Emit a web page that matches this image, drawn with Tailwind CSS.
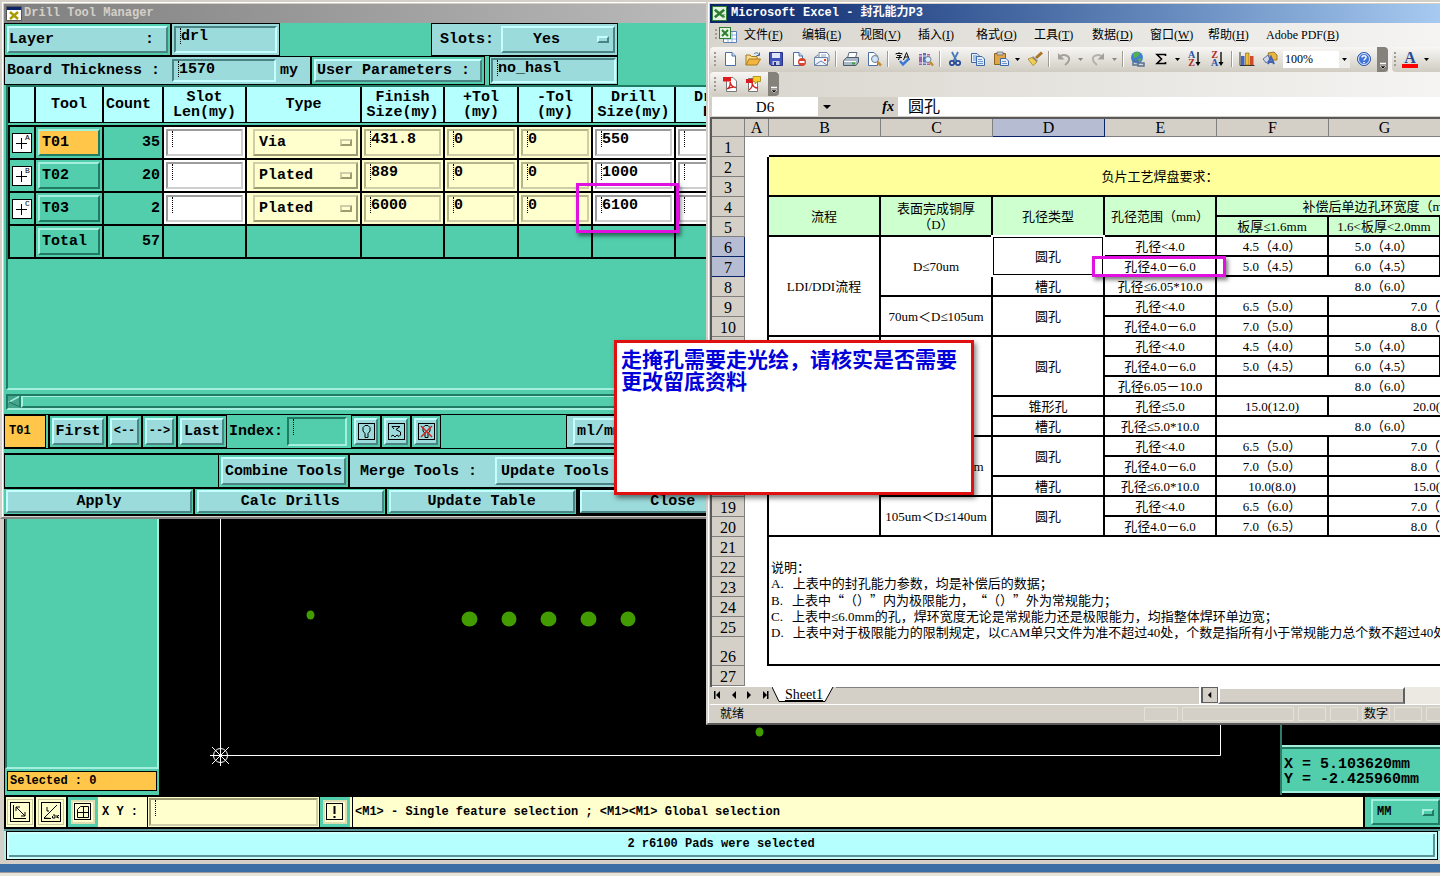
<!doctype html>
<html lang="zh-CN">
    <head>
        <meta charset="UTF-8" />
        <meta name="viewport" content="width=device-width, initial-scale=1.0" />
        <title>Drill Tool Manager</title>
        <script src="https://cdn.jsdelivr.net/npm/@tailwindcss/browser@4"></script>
    </head>
    <body
        class="relative flex h-screen flex-col overflow-hidden bg-[#3a6ea5] font-['Liberation_Mono','Noto_Sans_CJK_SC',monospace] font-bold text-black"
    >
        <!-- graphic editor, behind the other windows -->
        <main
            class="flex min-h-0 flex-1 flex-col border-l-4 border-b-4 border-[#d4d0c8] bg-[#52cead]"
        >
            <div class="flex min-h-0 flex-1 bg-black">
                <aside
                    class="flex w-[155px] shrink-0 flex-col border-l border-black bg-[#52cead]"
                >
                    <div
                        class="flex-1 border-2 border-t-[#217b63] border-l-[#217b63] border-r-[#a5efde] border-b-[#a5efde]"
                    ></div>
                    <div
                        class="mx-0.5 mt-0.5 mb-1 border border-black bg-[#ffc64a] px-0.5 text-[12px] leading-[18px]"
                    >
                        Selected : 0
                    </div>
                </aside>
                <div class="min-w-0 flex-1">
                    <svg class="size-full" fill="none">
                        <path d="M61.500 0V755.500H1061.500V0" stroke="#fff" />
                        <g stroke="#fff">
                            <circle cx="61.500" cy="755.500" r="7" />
                            <path
                                d="M51 755.500H72M61.500 745V766M53 747L70 764M70 747L53 764"
                            />
                        </g>
                        <g fill="#429c00">
                            <ellipse cx="151.500" cy="615" rx="4" ry="4.500" />
                            <ellipse cx="310.500" cy="619" rx="8" ry="7.500" />
                            <ellipse cx="350" cy="619" rx="7.500" ry="7.500" />
                            <ellipse cx="389.500" cy="619" rx="8" ry="7.500" />
                            <ellipse cx="429.500" cy="619" rx="8" ry="7.500" />
                            <ellipse cx="469" cy="619" rx="7.500" ry="7.500" />
                            <ellipse cx="600.500" cy="732" rx="4" ry="4.500" />
                        </g>
                    </svg>
                </div>
                <aside
                    class="flex w-[160px] shrink-0 flex-col border-l-2 border-[#317b6b]"
                >
                    <div class="flex-1 border-b-2 border-[#a5efde]"></div>
                    <div
                        class="mb-0.5 border-t-2 border-b-2 border-t-[#217b63] border-b-[#a5efde] bg-[#52cead] px-0.5 pt-2 pb-1 text-[15px] leading-[15px] whitespace-pre"
                    >X = 5.103620mm
Y = -2.425960mm</div>
                </aside>
            </div>

            <div
                class="flex h-[34px] border-y-2 border-black bg-[#ffffce] text-[12px]"
            >
                <div class="flex shrink-0">
                    <button
                        aria-label="Zoom box"
                        class="flex w-8 items-center justify-center border-x-2 border-black"
                    >
                        <svg class="size-[26px] shrink-0 border border-[#c6c69c]" viewBox="0 0 24 24" fill="none" stroke="#000">
                            <rect x="2.500" y="2.500" width="19" height="19" />
                            <path d="M5.500 5V18.500H18M8 7L17 16M8 11V7H12M17 12V16H13" />
                        </svg>
                    </button>
                    <button
                        aria-label="Angle"
                        class="flex w-8 items-center justify-center border-r-2 border-black"
                    >
                        <svg class="size-[26px] shrink-0 border border-[#c6c69c]" viewBox="0 0 24 24" fill="none" stroke="#000">
                            <rect x="2.500" y="2.500" width="19" height="19" />
                            <path d="M5 18.500H12L5 18L18 5M8 7V11H10M14 15H16V18H13.500V16M18 15V18M20 15L18 17L20 18" />
                        </svg>
                    </button>
                    <button
                        aria-label="Grid"
                        class="flex w-[30px] items-center justify-center border-3 border-[#52cead] bg-[#dedeb5]"
                    >
                        <svg class="h-5 w-5 bg-[#ffffce]" viewBox="0 0 20 20" fill="none" stroke="#000">
                            <rect x="1.500" y="1.500" width="16" height="16" />
                            <path d="M7.500 4.500H15.500V15.500H4.500V7.500ZM10.500 4V16M4 10.500H16" />
                        </svg>
                    </button>
                </div>
                <label for="xy" class="w-[49px] shrink-0 self-center pl-1 whitespace-nowrap">X Y :</label>
                <div
                    class="flex w-[173px] shrink-0 border-x border-black p-px"
                >
                    <div
                        class="flex w-full border-2 border-t-[#9c9c73] border-l-[#9c9c73] border-r-[#ceceaa] border-b-[#ceceaa] pl-1"
                    >
                        <span class="h-4 border-l border-dotted border-black"></span>
                        <input id="xy" class="w-full bg-transparent outline-none" />
                    </div>
                </div>
                <button
                    aria-label="Message"
                    class="mr-0.5 flex w-[30px] shrink-0 items-center justify-center border-3 border-[#52cead] bg-[#dedeb5]"
                >
                    <svg class="h-5 w-5 bg-[#ffffce]" viewBox="0 0 20 20" fill="none" stroke="#000">
                        <rect x="1.500" y="1.500" width="16" height="16" />
                        <path d="M9.500 4V12M9.500 14V16" stroke-width="2" />
                    </svg>
                </button>
                <p class="flex-1 self-stretch border-l border-black pl-0.5 leading-[30px] whitespace-nowrap">
                    &lt;M1&gt; - Single feature selection ; &lt;M1&gt;&lt;M1&gt; Global selection
                </p>
                <div
                    class="flex w-[77px] shrink-0 border-l-2 border-black bg-[#52cead] py-0.5 pl-1.5"
                >
                    <div
                        class="relative flex flex-1 border-2 border-t-[#a5efde] border-l-[#a5efde] border-r-[#217b63] border-b-[#217b63]"
                    >
                        <select
                            aria-label="Units"
                            class="w-full appearance-none bg-transparent pl-1 text-[12px] outline-none"
                        >
                            <option>MM</option>
                            <option>INCH</option>
                        </select>
                        <span
                            class="pointer-events-none absolute top-2 right-1 h-[7px] w-3 border-2 border-t-[#a5efde] border-l-[#a5efde] border-r-[#217b63] border-b-[#217b63]"
                        ></span>
                    </div>
                </div>
            </div>
            <div class="border-t-2 border-[#5a9494] bg-[#b5efe7] px-0.5">
                <div class="border border-black bg-[#ceffff] p-0.5">
                    <p
                        class="border-r-2 border-b-2 border-[#5a9494] bg-[#b5ffff] text-center text-[12px] leading-[21px]"
                    >
                        2 r6100 Pads were selected
                    </p>
                </div>
            </div>
        </main>
        <footer class="mt-2 h-1 shrink-0 border-t border-[#9c9c9c] bg-[#e8e4dc]"></footer>

        <!-- drill tool manager -->
        <section
            class="absolute top-0 left-0 flex w-[772px] flex-col border-2 border-[#d4d0c8] border-b-[#848484] bg-[#d4d0c8] text-[15px] leading-[15px]"
        >
            <div class="border-t border-l border-white p-px">
                <h1
                    class="flex h-[19px] items-center bg-linear-to-r from-[#808080] to-[#c0c0c0] pl-0.5 text-[12px] text-[#d4d0c8]"
                >
                    <svg class="h-[15px] w-4 shrink-0" viewBox="0 0 16 15">
                        <path d="M.500.500H15.500V14.500H.500Z" fill="#fff" stroke="#555" />
                        <path d="M1 1H15V4H1Z" fill="#0a246a" />
                        <path d="M4 6L12 13M12 6L4 13" stroke="#a89c00" stroke-width="2.500" />
                    </svg>
                    <span class="pl-0.5">Drill Tool Manager</span>
                </h1>
                <div class="bg-[#52cead]">
                    <div class="flex h-[33px]">
                        <div class="w-[167px] border border-black p-0.5">
                            <button
                                class="flex size-full items-center justify-between border-2 border-t-[#c6ffff] border-l-[#c6ffff] border-r-[#4a8484] border-b-[#4a8484] bg-[#9cdbdb] pr-3"
                            >
                                <span>Layer</span><span>:</span>
                            </button>
                        </div>
                        <div class="w-[109px] border border-black bg-[#9cdbdb] p-0.5">
                            <div
                                class="flex size-full border-2 border-t-[#4a8484] border-l-[#4a8484] border-r-[#c6ffff] border-b-[#c6ffff] pl-1"
                            >
                                <span class="h-4 border-l border-dotted border-black"></span>
                                <input aria-label="Layer" value="drl" class="h-4 w-full bg-transparent outline-none" />
                            </div>
                        </div>
                        <div class="ml-[151px] flex w-[187px] items-center border border-black bg-[#9cdbdb] p-0.5">
                            <label for="slots" class="w-[67px] pl-1.5">Slots:</label>
                            <div
                                class="relative flex h-full flex-1 border-2 border-t-[#c6ffff] border-l-[#c6ffff] border-r-[#4a8484] border-b-[#4a8484]"
                            >
                                <select id="slots" class="w-full appearance-none bg-transparent pl-[30px] outline-none">
                                    <option>Yes</option>
                                    <option>No</option>
                                </select>
                                <span
                                    class="pointer-events-none absolute top-2 right-1 h-[7px] w-3 border-2 border-t-[#c6ffff] border-l-[#c6ffff] border-r-[#4a8484] border-b-[#4a8484]"
                                ></span>
                            </div>
                        </div>
                    </div>
                    <div class="flex h-[29px]">
                        <div class="flex w-[307px] items-center border border-black bg-[#9cdbdb] p-0.5">
                            <label for="thick" class="w-[165px] whitespace-nowrap">Board Thickness :</label>
                            <div
                                class="flex h-full w-[104px] border-2 border-t-[#4a8484] border-l-[#4a8484] border-r-[#c6ffff] border-b-[#c6ffff] pl-1"
                            >
                                <span class="h-4 border-l border-dotted border-black"></span>
                                <input id="thick" value="1570" class="h-4 w-full bg-transparent outline-none" />
                            </div>
                            <span class="pl-1">my</span>
                        </div>
                        <div class="mr-1 w-[174px] border border-black p-0.5">
                            <button
                                class="size-full border-2 border-t-[#c6ffff] border-l-[#c6ffff] border-r-[#4a8484] border-b-[#4a8484] bg-[#9cdbdb] pl-px text-left whitespace-nowrap"
                            >
                                User Parameters :
                            </button>
                        </div>
                        <div class="w-[129px] border border-black bg-[#9cdbdb] p-px">
                            <div
                                class="flex size-full border-2 border-t-[#4a8484] border-l-[#4a8484] border-r-[#c6ffff] border-b-[#c6ffff] pl-1"
                            >
                                <span class="h-4 border-l border-dotted border-black"></span>
                                <input aria-label="User parameters" value="no_hasl" class="h-4 w-full bg-transparent outline-none" />
                            </div>
                        </div>
                    </div>

                    <div
                        class="mx-0.5 h-[305px] overflow-hidden border-2 border-t-[#217b63] border-l-[#217b63] border-r-[#a5efde] border-b-[#a5efde]"
                    >
                        <table class="w-[780px] table-fixed border-separate border-spacing-0">
                            <colgroup>
                                <col class="w-[28px]" />
                                <col class="w-[68px]" />
                                <col class="w-[60px]" />
                                <col class="w-[83px]" />
                                <col class="w-[115px]" />
                                <col class="w-[83px]" />
                                <col class="w-[74px]" />
                                <col class="w-[74px]" />
                                <col class="w-[83px]" />
                                <col class="w-[83px]" />
                                <col />
                            </colgroup>
                            <thead class="bg-[#b5ffff]">
                                <tr class="h-9">
                                    <th class="border-x-2 border-b border-black"></th>
                                    <th class="border-r-2 border-b border-black">Tool</th>
                                    <th class="border-r-2 border-b border-black pl-0.5 text-left">Count</th>
                                    <th class="border-r-2 border-b border-black">Slot<br />Len(my)</th>
                                    <th class="border-r-2 border-b border-black">Type</th>
                                    <th class="border-r-2 border-b border-black">Finish<br />Size(my)</th>
                                    <th class="border-r-2 border-b border-black">+Tol<br />(my)</th>
                                    <th class="border-r-2 border-b border-black">-Tol<br />(my)</th>
                                    <th class="border-r-2 border-b border-black">Drill<br />Size(my)</th>
                                    <th class="border-r-2 border-b border-black">Drill<br />Des</th>
                                    <th class="border-b border-black"></th>
                                </tr>
                            </thead>
                            <tbody id="tools">
                                <tr class="h-0.5"><td colspan="11" class="p-0"></td></tr>
                            </tbody>
                        </table>
                    </div>

                    <div class="mx-0.5 my-1 flex h-4 border-2 border-t-[#217b63] border-l-[#217b63] border-r-[#a5efde] border-b-[#a5efde]">
                        <svg class="h-3 w-[13px]" viewBox="0 0 13 12">
                            <path d="M0 0H13V12H0Z" fill="#42a58c" />
                            <path d="M12 0L1 6L12 11" fill="none" stroke="#a5efde" stroke-width="1.500" />
                            <path d="M12 0V11L1 6" fill="none" stroke="#217b63" stroke-width="1.500" />
                        </svg>
                        <div class="flex-1 border-l-2 border-t border-b-2 border-[#a5efde] border-b-[#217b63]"></div>
                    </div>

                    <div class="flex h-[35px] border-y border-black">
                        <div class="mr-0.5 flex w-[42px] items-center border border-black bg-[#ffc64a] pl-1 text-[12px]">
                            T01
                        </div>
                        <div class="w-[60px] border-x-2 border-y border-black p-0.5">
                            <button class="size-full border-2 border-t-[#c6ffff] border-l-[#c6ffff] border-r-[#4a8484] border-b-[#4a8484] bg-[#9cdbdb]">First</button>
                        </div>
                        <div class="w-[35px] border-r-2 border-y border-black p-0.5">
                            <button class="flex size-full items-center justify-center border-2 border-t-[#c6ffff] border-l-[#c6ffff] border-r-[#4a8484] border-b-[#4a8484] bg-[#9cdbdb] text-[12px]">&lt;--</button>
                        </div>
                        <div class="w-[35px] border-r-2 border-y border-black p-0.5">
                            <button class="flex size-full items-center justify-center border-2 border-t-[#c6ffff] border-l-[#c6ffff] border-r-[#4a8484] border-b-[#4a8484] bg-[#9cdbdb] text-[12px]">--&gt;</button>
                        </div>
                        <div class="w-[49px] border-r border-y border-black p-0.5">
                            <button class="flex size-full items-center justify-center border-2 border-t-[#c6ffff] border-l-[#c6ffff] border-r-[#4a8484] border-b-[#4a8484] bg-[#9cdbdb]">Last</button>
                        </div>
                        <label for="index" class="w-[60px] self-center pl-0.5">Index:</label>
                        <div
                            class="my-0.5 mr-1 flex w-[60px] border-2 border-t-[#217b63] border-l-[#217b63] border-r-[#a5efde] border-b-[#a5efde] pl-1"
                        >
                            <span class="h-4 border-l border-dotted border-black"></span>
                            <input id="index" class="h-4 w-full bg-transparent outline-none" />
                        </div>
                        <div class="w-[30px] border border-black p-0.5">
                            <button aria-label="Show" class="flex size-full items-center justify-center border-2 border-t-[#c6ffff] border-l-[#c6ffff] border-r-[#4a8484] border-b-[#4a8484] bg-[#9cdbdb]">
                                <svg class="h-[17px] w-[17px]" viewBox="0 0 17 17" fill="none" stroke="#000">
                                    <rect x=".500" y=".500" width="16" height="16" />
                                    <path d="M7 10.500L5 8V4.500L7 2.500H10L12 4.500V8L10 10.500V14.500H7Z" />
                                </svg>
                            </button>
                        </div>
                        <div class="w-[30px] border border-black p-0.5">
                            <button aria-label="Undo" class="flex size-full items-center justify-center border-2 border-t-[#c6ffff] border-l-[#c6ffff] border-r-[#4a8484] border-b-[#4a8484] bg-[#9cdbdb]">
                                <svg class="h-[17px] w-[17px]" viewBox="0 0 17 17" fill="none" stroke="#000">
                                    <rect x=".500" y=".500" width="16" height="16" />
                                    <path d="M4 3.500H12L8 6.500L12.500 9V12L11 13.500L9 12L7 14L5 12L3 13.500M6 6L4 3.500" />
                                </svg>
                            </button>
                        </div>
                        <div class="w-[30px] border border-black p-0.5">
                            <button aria-label="Delete" class="flex size-full items-center justify-center border-2 border-t-[#c6ffff] border-l-[#c6ffff] border-r-[#4a8484] border-b-[#4a8484] bg-[#9cdbdb]">
                                <svg class="h-[17px] w-[17px]" viewBox="0 0 17 17" fill="none" stroke="#000">
                                    <rect x=".500" y=".500" width="16" height="16" />
                                    <path d="M7 10.500L5 8V4.500L7 2.500H10L12 4.500V8L10 10.500V14.500H7Z" />
                                    <path d="M3 3L14 14M14 3L3 14" stroke="#d62121" stroke-width="1.500" />
                                </svg>
                            </button>
                        </div>
                        <div class="flex-1"></div>
                        <div class="w-[203px] border border-black bg-[#9cdbdb] py-0.5 pl-1.5">
                            <button class="size-full border-2 border-t-[#c6ffff] border-l-[#c6ffff] border-r-[#4a8484] border-b-[#4a8484] pl-0.5 text-left">ml/mm</button>
                        </div>
                    </div>

                    <div class="mt-1 flex h-[34px] border-t-2 border-black">
                        <div class="w-[214px] border-l border-black"></div>
                        <div class="w-[131px] border-x border-black p-0.5">
                            <button class="size-full border-2 border-t-[#c6ffff] border-l-[#c6ffff] border-r-[#4a8484] border-b-[#4a8484] bg-[#9cdbdb] whitespace-nowrap">Combine Tools</button>
                        </div>
                        <div class="flex flex-1 items-center border-l border-black bg-[#9cdbdb] py-0.5 pl-2.5">
                            <label for="merge" class="w-[135px] whitespace-nowrap">Merge Tools :</label>
                            <button id="merge" class="h-full flex-1 border-2 border-t-[#c6ffff] border-l-[#c6ffff] border-r-[#4a8484] border-b-[#4a8484] pl-1 text-left">Update Tools</button>
                        </div>
                    </div>
                    <div class="grid h-[29px] grid-cols-4 border-y-2 border-black">
                        <div class="border-r-2 border-black p-px pl-0.5">
                            <button class="size-full border-2 border-t-[#c6ffff] border-l-[#c6ffff] border-r-[#4a8484] border-b-[#4a8484] bg-[#9cdbdb]">Apply</button>
                        </div>
                        <div class="border-r-2 border-black p-px pl-0.5">
                            <button class="size-full border-2 border-t-[#c6ffff] border-l-[#c6ffff] border-r-[#4a8484] border-b-[#4a8484] bg-[#9cdbdb]">Calc Drills</button>
                        </div>
                        <div class="border-r-2 border-black p-px pl-0.5">
                            <button class="size-full border-2 border-t-[#c6ffff] border-l-[#c6ffff] border-r-[#4a8484] border-b-[#4a8484] bg-[#9cdbdb]">Update Table</button>
                        </div>
                        <div class="border-r-2 border-black bg-black p-px pl-0.5">
                            <button class="size-full border-2 border-t-[#c6ffff] border-l-[#c6ffff] border-r-[#4a8484] border-b-[#4a8484] bg-[#9cdbdb]">Close</button>
                        </div>
                    </div>
                </div>
            </div>
        </section>

        <!-- excel -->
        <section
            class="absolute top-0 right-0 left-[706px] flex flex-col overflow-hidden border-y-2 border-l-2 border-[#d4d0c8] border-b-[#5a5a5a] bg-[#d4d0c8] font-['Liberation_Serif','Noto_Sans_CJK_SC',serif] text-[12px] font-normal"
        >
            <div class="border-t border-l border-white pt-px pl-px">
                <h2
                    class="flex h-[19px] items-center gap-1 bg-linear-to-r from-[#0a246a] to-[#a6caf0] pl-0.5 font-['Liberation_Mono','Noto_Sans_CJK_SC',monospace] leading-[19px] font-bold whitespace-nowrap text-white"
                >
                    <svg class="h-[15px] w-[15px] shrink-0" viewBox="0 0 16 16">
                        <rect x=".500" y=".500" width="15" height="15" fill="#e4f3e0" stroke="#2d7d32" />
                        <path d="M3 4L13 12M13 4L3 12" stroke="#2d7d32" stroke-width="2.800" />
                        <path d="M10 9L14 9M11 12H14" stroke="#7fb67f" />
                    </svg>
                    Microsoft Excel - 封孔能力P3
                </h2>
                <nav class="flex h-[23px] items-center bg-linear-to-r from-[#d8d5cd] to-[#f5f4f2] pl-1">
                    <svg class="mr-1.5 h-[18px] w-6 shrink-0" viewBox="0 0 24 18">
                        <path d="M1 4h2M1 8h2M1 12h2" stroke="#a09c94" stroke-width="2" />
                        <path d="M9.500 5.500H22.500V16.500H9.500Z" fill="#fff" stroke="#5b7fb8" />
                        <path d="M10 9H22M10 13H22M14 6V16M18 6V16" stroke="#8fb0dc" />
                        <rect x="5.500" y="1.500" width="11" height="11" fill="#e4f3e0" stroke="#2d7d32" />
                        <path d="M8 4L14 10M14 4L8 10" stroke="#2d7d32" stroke-width="2" />
                    </svg>
                    <button class="w-[58px] shrink-0 text-left">文件(<u>F</u>)</button>
                    <button class="w-[58px] shrink-0 text-left">编辑(<u>E</u>)</button>
                    <button class="w-[58px] shrink-0 text-left">视图(<u>V</u>)</button>
                    <button class="w-[58px] shrink-0 text-left">插入(<u>I</u>)</button>
                    <button class="w-[58px] shrink-0 text-left">格式(<u>O</u>)</button>
                    <button class="w-[58px] shrink-0 text-left">工具(<u>T</u>)</button>
                    <button class="w-[58px] shrink-0 text-left">数据(<u>D</u>)</button>
                    <button class="w-[58px] shrink-0 text-left">窗口(<u>W</u>)</button>
                    <button class="w-[58px] shrink-0 text-left">帮助(<u>H</u>)</button>
                    <button class="shrink-0 text-left">Adobe PDF(<u>B</u>)</button>
                </nav>

                <div class="flex h-[26px] items-center bg-linear-to-r from-[#d8d5cd] to-[#f5f4f2]">
                    <div class="flex h-[25px] shrink-0 items-center rounded-l-sm bg-linear-to-b from-[#f8f7f5] to-[#d0ccc2] pl-1">
                        <svg class="h-[18px] w-1" viewBox="0 0 4 18"><path d="M0 3h2M0 7h2M0 11h2M0 15h2" stroke="#a09c94" stroke-width="2" /></svg>
                        <button aria-label="新建" class="flex w-[23px] justify-center">
                            <svg class="size-4" viewBox="0 0 16 16"><path d="M3.500 1.500H10L13.500 5V14.500H3.500Z" fill="#fff" stroke="#4a6fa5" /><path d="M10 1.500V5H13.500" fill="#cfe0f5" stroke="#4a6fa5" /></svg>
                        </button>
                        <button aria-label="打开" class="flex w-[23px] justify-center">
                            <svg class="size-4" viewBox="0 0 16 16"><path d="M1 14V4H5L6.500 5.500H12V8" fill="#f6d98a" stroke="#a67a1c" /><path d="M1 14L4 8H15.500L12 14Z" fill="#f3b53f" stroke="#a67a1c" /><path d="M9 3C11 1 13 1.500 14 4M14.500 1.500V4.500H11.500" fill="none" stroke="#3c69b0" /></svg>
                        </button>
                        <button aria-label="保存" class="flex w-[23px] justify-center">
                            <svg class="size-4" viewBox="0 0 16 16"><path d="M1.500 1.500H14.500V14.500H3L1.500 13Z" fill="#4352b8" stroke="#2a3486" /><path d="M4 2H12V7H4Z" fill="#dfe6fa" /><path d="M4.500 10H11.500V14H4.500Z" fill="#c6cbe6" /><path d="M6 11H8V14H6Z" fill="#2a3486" /></svg>
                        </button>
                        <button aria-label="权限" class="flex w-[23px] justify-center">
                            <svg class="size-4" viewBox="0 0 16 16"><path d="M2.500 1.500H8L11.500 5V14.500H2.500Z" fill="#fff" stroke="#4a6fa5" /><path d="M8 1.500V5H11.500" fill="#cfe0f5" stroke="#4a6fa5" /><circle cx="11" cy="11" r="4" fill="#d8432b" /><path d="M8.500 11H13.500" stroke="#fff" stroke-width="2" /></svg>
                        </button>
                        <button aria-label="电子邮件" class="flex w-[23px] justify-center">
                            <svg class="size-4" viewBox="0 0 16 16"><path d="M5 1.500H13L15 4V10H5Z" fill="#fff" stroke="#6b83a8" /><path d="M7 4H12M7 6H12" stroke="#8fa8cc" /><path d="M.500 6.500L4 4M.500 6.500H13.500V14.500H.500Z" fill="#eef3fb" stroke="#6b83a8" /><path d="M1 14L7 10L13 14" fill="none" stroke="#6b83a8" /><path d="M10 8H12V10H10Z" fill="#d8432b" /></svg>
                        </button>
                        <i class="mx-0.5 h-4 w-0.5 border-l border-[#a09c94] bg-white"></i>
                        <button aria-label="打印" class="flex w-[23px] justify-center">
                            <svg class="size-4" viewBox="0 0 16 16"><path d="M4.500 7L6 1.500H14L12.500 7" fill="#fff" stroke="#5c6c80" /><path d="M.500 10L3.500 6.500H15.500V11L13 14.500H.500Z" fill="#a9b8c8" stroke="#4b5a6c" /><path d="M1 10.500H13" stroke="#fff" /><path d="M9 11.500H12V13.500H9Z" fill="#3ca03c" /></svg>
                        </button>
                        <button aria-label="打印预览" class="flex w-[23px] justify-center">
                            <svg class="size-4" viewBox="0 0 16 16"><path d="M2.500 1.500H8L11.500 5V14.500H2.500Z" fill="#fff" stroke="#4a6fa5" /><circle cx="9" cy="8" r="3.500" fill="#cfe6f7" stroke="#6a7c90" /><path d="M11.500 11L15 14.500" stroke="#c98a2c" stroke-width="2.500" /></svg>
                        </button>
                        <i class="mx-0.5 h-4 w-0.5 border-l border-[#a09c94] bg-white"></i>
                        <button aria-label="拼写检查" class="flex w-[23px] justify-center">
                            <svg class="size-4" viewBox="0 0 16 16" fill="none"><path d="M1 3.500V2.500H7V3.500M4 1V2.500M2 4.500H6L4 6V8.500H3M1 6.500H7M8.500 9L11.500 1.500L14.500 9M9.500 6H13.500" stroke="#111" /><path d="M5 10L8 13.500L14 7.500" stroke="#3c7ad6" stroke-width="2.500" /></svg>
                        </button>
                        <button aria-label="信息检索" class="flex w-[23px] justify-center">
                            <svg class="size-4" viewBox="0 0 16 16"><path d="M1 3H4V14H1Z" fill="#9a5fae" /><path d="M5 2H8V14H5Z" fill="#4f74c4" /><path d="M9 3H12V14H9Z" fill="#c0569a" /><path d="M1 5H12M1 12H12" stroke="#f0e0f0" /><circle cx="10" cy="8.500" r="3" fill="#d8ecf8" stroke="#6a7c90" /><path d="M12 11L15 14.500" stroke="#c98a2c" stroke-width="2.500" /></svg>
                        </button>
                        <i class="mx-0.5 h-4 w-0.5 border-l border-[#a09c94] bg-white"></i>
                        <button aria-label="剪切" class="flex w-[23px] justify-center">
                            <svg class="size-4" viewBox="0 0 16 16" fill="none"><path d="M5 1L9.500 10M11 1L6.500 10" stroke="#4a7ab8" stroke-width="1.800" /><circle cx="5" cy="12" r="2.200" stroke="#23489a" stroke-width="1.700" /><circle cx="11" cy="12" r="2.200" stroke="#23489a" stroke-width="1.700" /></svg>
                        </button>
                        <button aria-label="复制" class="flex w-[23px] justify-center">
                            <svg class="size-4" viewBox="0 0 16 16"><path d="M1.500 2.500H7L9.500 5V11.500H1.500Z" fill="#e4eefb" stroke="#3d68ac" /><path d="M3 5H7M3 7H7M3 9H7" stroke="#6f94cc" /><path d="M6.500 5.500H12L14.500 8V14.500H6.500Z" fill="#e4eefb" stroke="#3d68ac" /><path d="M8 8.500H12M8 10.500H13M8 12.500H13" stroke="#6f94cc" /></svg>
                        </button>
                        <button aria-label="粘贴" class="flex w-[23px] justify-center">
                            <svg class="size-4" viewBox="0 0 16 16"><path d="M1.500 2.500H12.500V13.500H1.500Z" fill="#e0a645" stroke="#8e6420" /><path d="M4 1H10V4H4Z" fill="#c9ccd2" stroke="#666" stroke-width=".700" /><path d="M7.500 7.500H13L15.500 10V14.500H7.500Z" fill="#e4eefb" stroke="#3d68ac" /><path d="M9 10.500H13M9 12.500H14" stroke="#6f94cc" /></svg>
                        </button>
                        <svg class="h-4 w-[11px]" viewBox="0 0 11 16"><path d="M3 7H8L5.500 10Z" /></svg>
                        <button aria-label="格式刷" class="flex w-[23px] justify-center">
                            <svg class="size-4" viewBox="0 0 16 16"><path d="M15 1.500L9 7" stroke="#a8762a" stroke-width="3" /><path d="M6 5L11 10L9 11L5 7Z" fill="#7a8496" /><path d="M5 6.500L1 8L6 14.500L10 11Z" fill="#f1cf52" stroke="#a3832a" stroke-width=".800" /></svg>
                        </button>
                        <i class="mx-0.5 h-4 w-0.5 border-l border-[#a09c94] bg-white"></i>
                        <button aria-label="撤消" class="flex w-[23px] justify-center">
                            <svg class="size-4" viewBox="0 0 16 16" fill="none"><path d="M3 6C8 2 14 5 13 9C12.500 11 11 12.500 9 14" stroke="#a3a09a" stroke-width="2" /><path d="M2 2V8.500H8.500Z" fill="#a3a09a" /></svg>
                        </button>
                        <svg class="h-4 w-[11px]" viewBox="0 0 11 16" fill="#8c8880"><path d="M3 7H8L5.500 10Z" /></svg>
                        <button aria-label="恢复" class="flex w-[23px] justify-center">
                            <svg class="size-4" viewBox="0 0 16 16" fill="none"><path d="M13 6C8 2 2 5 3 9C3.500 11 5 12.500 7 14" stroke="#b5b2ac" stroke-width="2" /><path d="M14 2V8.500H7.500Z" fill="#a3a09a" /></svg>
                        </button>
                        <svg class="h-4 w-[11px]" viewBox="0 0 11 16" fill="#8c8880"><path d="M3 7H8L5.500 10Z" /></svg>
                        <i class="mx-0.5 h-4 w-0.5 border-l border-[#a09c94] bg-white"></i>
                        <button aria-label="超链接" class="flex w-[23px] justify-center">
                            <svg class="size-4" viewBox="0 0 16 16"><circle cx="7" cy="6.500" r="6" fill="#3f80d0" /><path d="M3 3C6 0 9 1 10 3L7 6L4 7ZM8 8L12 7L9 12Z" fill="#57b04a" /><path d="M3 10H8V14H3ZM8 12H14V15H8Z" fill="none" stroke="#5a6f94" stroke-width="1.500" /></svg>
                        </button>
                        <button aria-label="自动求和" class="flex w-[23px] justify-center">
                            <svg class="size-4" viewBox="0 0 16 16" fill="none"><path d="M12.500 5V3.500H4L8.500 8L4 12.500H12.500V11" stroke="#000" stroke-width="1.600" /></svg>
                        </button>
                        <svg class="h-4 w-[11px]" viewBox="0 0 11 16"><path d="M3 7H8L5.500 10Z" /></svg>
                        <button aria-label="升序排序" class="flex w-[23px] items-center justify-center">
                            <span class="text-[10px] leading-[8px] font-bold"><b class="block text-[#2b53a8]">A</b><b class="block text-[#b02a2a]">Z</b></span>
                            <svg class="h-4 w-1.5" viewBox="0 0 6 16"><path d="M3 1V12" stroke="#000" stroke-width="1.300" /><path d="M.500 11H5.500L3 15Z" /></svg>
                        </button>
                        <button aria-label="降序排序" class="flex w-[23px] items-center justify-center">
                            <span class="text-[10px] leading-[8px] font-bold"><b class="block text-[#b02a2a]">Z</b><b class="block text-[#2b53a8]">A</b></span>
                            <svg class="h-4 w-1.5" viewBox="0 0 6 16"><path d="M3 1V12" stroke="#000" stroke-width="1.300" /><path d="M.500 11H5.500L3 15Z" /></svg>
                        </button>
                        <i class="mx-0.5 h-4 w-0.5 border-l border-[#a09c94] bg-white"></i>
                        <button aria-label="图表向导" class="flex w-[23px] justify-center">
                            <svg class="size-4" viewBox="0 0 16 16"><path d="M1 1V14.500H15.500" fill="none" stroke="#333" /><path d="M2 5H5.500V14H2Z" fill="#3f66c0" /><path d="M6.500 2H10V14H6.500Z" fill="#efbd3a" stroke="#7c5c10" stroke-width=".600" /><path d="M11 5H14.500V14H11Z" fill="#d04a2c" /></svg>
                        </button>
                        <button aria-label="绘图" class="flex w-[23px] justify-center">
                            <svg class="size-4" viewBox="0 0 16 16"><path d="M6 2L12 1L15 4V9H8Z" fill="#e9b63f" stroke="#8c6718" stroke-width=".800" /><path d="M1 8L6 4L8 9L4 12Z" fill="#cfd8ea" stroke="#45598c" stroke-width=".800" /><path d="M6 13L9 6L12 13M7 11H11" fill="none" stroke="#4361b5" stroke-width="2" /></svg>
                        </button>
                        <div class="relative ml-0.5 flex h-[17px] w-[67px] bg-white">
                            <select aria-label="显示比例" class="w-full appearance-none bg-transparent pl-0.5 leading-[14px] outline-none">
                                <option>100%</option>
                                <option>75%</option>
                            </select>
                            <svg class="pointer-events-none absolute top-0 right-0 h-[17px] w-[11px] bg-[#eeece8]" viewBox="0 0 11 17"><path d="M3 7H8L5.500 10Z" /></svg>
                        </div>
                        <button aria-label="帮助" class="ml-0.5 flex w-[23px] justify-center">
                            <svg class="size-4" viewBox="0 0 16 16" fill="none"><circle cx="8" cy="8" r="6.500" fill="#3f74d8" stroke="#2a55a8" /><circle cx="8" cy="8" r="5.500" stroke="#dfe9fa" /><path d="M6 6.500C6 4 10.200 4 10 6.500C10 8 8 8 8 9.500M8 11V12.300" stroke="#fff" stroke-width="1.500" /></svg>
                        </button>
                        <svg class="ml-0.5 h-[25px] w-[11px] rounded-r-sm bg-[#85827c]" viewBox="0 0 11 25"><path d="M3 16.500H9" stroke="#fff" stroke-width="1.500" /><path d="M3 19H9L6 22Z" stroke="#fff" stroke-width=".600" /></svg>
                    </div>
                    <div class="ml-1 flex h-[25px] flex-1 items-center rounded-l-sm bg-linear-to-b from-[#f8f7f5] to-[#d0ccc2] pl-0.5">
                        <svg class="h-[18px] w-1 shrink-0" viewBox="0 0 4 18"><path d="M0 3h2M0 7h2M0 11h2M0 15h2" stroke="#a09c94" stroke-width="2" /></svg>
                        <button aria-label="字体颜色" class="ml-1 w-4 shrink-0 border-b-4 border-[#ff0000] text-[16px] leading-[13px] font-bold text-[#2b4a94]">A</button>
                        <svg class="h-4 w-[15px] shrink-0" viewBox="0 0 15 16"><path d="M6 7H11L8.500 10Z" /></svg>
                    </div>
                </div>

                <div class="flex h-[25px] bg-linear-to-r from-[#d8d5cd] to-[#f5f4f2]">
                    <div class="flex h-[24px] items-center rounded-l-sm bg-linear-to-b from-[#f8f7f5] to-[#d0ccc2] pl-1">
                        <svg class="h-[18px] w-1" viewBox="0 0 4 18"><path d="M0 3h2M0 7h2M0 11h2M0 15h2" stroke="#a09c94" stroke-width="2" /></svg>
                        <button aria-label="转换为 PDF" class="flex w-[23px] justify-center">
                            <svg class="size-4" viewBox="0 0 16 16"><path d="M4.500 1.500H11L14.500 5V15.500H4.500Z" fill="#fff" stroke="#777" /><path d="M1 1H9V5.500H1Z" fill="#e01b1b" /><path d="M5 13C8 11 8.500 8 8 6C9 10 11 11.500 14 11.500C11 10.500 8 11.500 5 13Z" fill="none" stroke="#d02020" stroke-width="1.300" /></svg>
                        </button>
                        <button aria-label="转换为 PDF 并审阅" class="flex w-[23px] justify-center">
                            <svg class="size-4" viewBox="0 0 16 16"><path d="M3.500 2.500H12.500V15.500H3.500Z" fill="#fff" stroke="#777" /><path d="M1 3H8V7H1Z" fill="#e01b1b" /><path d="M8 .500H15.500V5.500H12L10 8V5.500H8Z" fill="#f6cf2a" stroke="#a78512" stroke-width=".800" /><path d="M4 14C7 12 7.500 9 7 7C8 11 10 12 13 12" fill="none" stroke="#d02020" stroke-width="1.300" /></svg>
                        </button>
                        <svg class="ml-1 h-[24px] w-[11px] rounded-r-sm bg-[#85827c]" viewBox="0 0 11 24"><path d="M3 15.500H9" stroke="#fff" stroke-width="1.500" /><path d="M3 18H9L6 21Z" stroke="#fff" stroke-width=".600" /></svg>
                    </div>
                </div>

                <div class="flex h-5 items-center pb-px text-[16px] leading-[16px]">
                    <input aria-label="名称框" value="D6" class="ml-0.5 h-[19px] w-[106px] shrink-0 bg-white pt-0.5 text-center text-[15px] outline-none" />
                    <svg class="h-4 w-4 shrink-0" viewBox="0 0 16 16"><path d="M5 6H13L9 10Z" /></svg>
                    <span class="w-[64px] shrink-0 pr-1 text-right text-[14px] font-bold italic">fx</span>
                    <input aria-label="编辑栏" value="圆孔" class="h-[19px] min-w-0 flex-1 bg-white pb-1 pl-2.5 outline-none" />
                </div>

                <div class="h-[570px] overflow-hidden border-t-2 border-l-2 border-[#5a5a5a] bg-white">
                    <table class="w-[841px] table-fixed border-separate border-spacing-0 text-[13px] leading-[16px] [text-spacing-trim:space-all]">
                        <colgroup>
                            <col class="w-[33px]" />
                            <col class="w-[24px]" />
                            <col class="w-[112px]" />
                            <col class="w-[112px]" />
                            <col class="w-[112px]" />
                            <col class="w-[112px]" />
                            <col class="w-[112px]" />
                            <col class="w-[112px]" />
                            <col class="w-[112px]" />
                        </colgroup>
                        <thead class="bg-[#d4d0c8] text-[16px] leading-[17px]">
                            <tr class="h-[18px]">
                                <th class="border-r border-b border-[#808080] p-0"></th>
                                <th class="border-r border-b border-[#808080] p-0 font-normal">A</th>
                                <th class="border-r border-b border-[#808080] p-0 font-normal">B</th>
                                <th class="border-r border-b border-[#808080] p-0 font-normal">C</th>
                                <th class="border-r border-b border-[#0a246a] bg-[#b6bdd2] p-0 font-normal">D</th>
                                <th class="border-r border-b border-[#808080] p-0 font-normal">E</th>
                                <th class="border-r border-b border-[#808080] p-0 font-normal">F</th>
                                <th class="border-r border-b border-[#808080] p-0 font-normal">G</th>
                                <th class="border-r border-b border-[#808080] p-0 font-normal">H</th>
                            </tr>
                        </thead>
                        <tbody id="sheet"></tbody>
                    </table>
                </div>

                <div class="flex h-[17px] items-stretch">
                    <svg class="h-4 w-[62px] shrink-0" viewBox="0 0 62 16">
                        <path d="M4 4H5.500V12H4ZM10 4V12L6 8ZM26 4V12L22 8ZM37 4V12L41 8ZM53 4V12L57 8ZM57 4H58.500V12H57Z" />
                    </svg>
                    <div class="relative w-[64px] shrink-0">
                        <svg class="absolute inset-0 h-4 w-[64px]" viewBox="0 0 64 16">
                            <path d="M0 0L7 14.500H53L61 0" fill="#fff" stroke="#000" />
                        </svg>
                        <a href="#" class="relative block text-center text-[14px] leading-[15px] underline">Sheet1</a>
                    </div>
                    <div class="flex-1 border-t border-[#808080]"></div>
                    <div class="flex w-[241px] shrink-0 border-l-2 border-white bg-[#ece9e3]">
                        <svg class="h-4 w-[17px] border border-l-2 border-[#606060] bg-[#d4d0c8]" viewBox="0 0 17 16"><path d="M10 4V12L6 8Z" /></svg>
                        <div class="w-[187px] border-2 border-t-white border-l-white border-r-[#606060] border-b-[#808080] bg-[#d4d0c8]"></div>
                    </div>
                </div>
                <div class="flex h-[19px] items-center border-t border-white">
                    <span class="flex-1 pl-2.5">就绪</span>
                    <div class="flex h-3.5 shrink-0 gap-1">
                        <i class="w-[34px] border border-[#e4e1da]"></i>
                        <i class="w-[112px] border border-[#e4e1da]"></i>
                        <i class="w-7 border border-[#e4e1da]"></i>
                        <i class="w-7 border border-[#e4e1da]"></i>
                        <span class="w-7 border border-[#e4e1da] text-center leading-[12px] whitespace-nowrap">数字</span>
                        <i class="w-7 border border-[#e4e1da]"></i>
                        <i class="w-3.5 border-y border-l border-[#e4e1da]"></i>
                    </div>
                </div>
            </div>
        </section>

        <!-- annotations -->
        <div class="absolute top-[183px] left-[576px] h-[50px] w-[103px] border-3 border-[#e010e0] shadow-[2px_3px_4px_rgba(0,0,0,0.5)]"></div>
        <div class="absolute top-[256px] left-[1092px] h-[21px] w-[134px] border-3 border-[#e010e0] shadow-[2px_3px_4px_rgba(0,0,0,0.5)]"></div>
        <div
            class="absolute top-[340px] left-[614px] h-[155px] w-[360px] border-3 border-[#e01010] bg-white px-1 py-1 font-['Noto_Sans_CJK_SC',sans-serif] text-[21px] leading-[22px] text-[#0000d8] shadow-[2px_3px_5px_rgba(0,0,0,0.5)]"
        >
            走掩孔需要走光绘，请核实是否需要更改留底资料
        </div>

        <script>
            const tools = [
                { key: "A", name: "T01", count: 35, type: "Via", finish: "431.8", drill: "550" },
                { key: "B", name: "T02", count: 20, type: "Plated", finish: "889", drill: "1000" },
                { key: "C", name: "T03", count: 2, type: "Plated", finish: "6000", drill: "6100" },
            ];

            const white = "bg-white";
            const cream = "bg-[#ffffce]";
            const field = (label, value, color, top) => `
                <td class="border-r-2 border-b-2 border-black p-0.5 ${color} ${top}">
                    <div class="flex h-[27px] border-2 ${color === cream ? "border-[#b5b58c] border-r-[#ceceaa] border-b-[#ceceaa]" : "border-[#9c9c9c] border-r-[#cecece] border-b-[#cecece]"} pl-1">
                        <span class="h-4 border-l border-dotted border-black"></span>
                        <input aria-label="${label}" value="${value}" class="h-4 w-full min-w-0 bg-transparent outline-none" />
                    </div>
                </td>`;

            document.getElementById("tools").innerHTML += tools
                .map((t, i) => {
                    const top = i === 0 ? "border-t-2" : "";
                    return `
            <tr>
                <td class="border-x-2 border-b-2 border-black p-0 ${top}">
                    <svg class="mx-auto h-5 w-5" viewBox="0 0 20 20" fill="none" stroke="#000">
                        <rect x=".5" y=".5" width="19" height="19" fill="#fff" />
                        <path d="M4 10.500H15M9.500 5V16" />
                        <text x="13" y="7" font-size="8" font-weight="400" fill="#000" stroke="none">${t.key}</text>
                    </svg>
                </td>
                <td class="border-r-2 border-b-2 border-black p-0.5 ${top}">
                    <button class="h-[27px] w-full border-2 border-t-[#a5efde] border-l-[#a5efde] border-r-[#217b63] border-b-[#217b63] pl-0.5 text-left ${i === 0 ? "bg-[#ffc64a]" : ""}">${t.name}</button>
                </td>
                <td class="border-r-2 border-b-2 border-black p-0 pr-0.5 text-right ${top}">${t.count}</td>
                ${field("Slot length", "", white, top)}
                <td class="border-r-2 border-b-2 border-black bg-[#ffffce] p-0.5 pl-1.5 ${top}">
                    <div class="relative flex h-[27px] border-2 border-[#ceceaa] border-r-[#9c9c73] border-b-[#9c9c73]">
                        <select aria-label="Type" class="w-full appearance-none bg-transparent pl-1 outline-none">
                            <option>${t.type}</option>
                        </select>
                        <span class="pointer-events-none absolute top-2 right-1 h-[7px] w-3 border-2 border-[#ceceaa] border-r-[#9c9c73] border-b-[#9c9c73]"></span>
                    </div>
                </td>
                ${field("Finish size", t.finish, cream, top)}
                ${field("+Tol", "0", cream, top)}
                ${field("-Tol", "0", cream, top)}
                ${field("Drill size", t.drill, white, top)}
                ${field("Drill des", "", white, top)}
                <td class="border-b-2 border-black ${top}"></td>
            </tr>`;
                })
                .join("") + `
            <tr class="h-[33px]">
                <td class="border-x-2 border-b-2 border-black"></td>
                <td class="border-r-2 border-b-2 border-black p-0.5">
                    <div class="h-[27px] w-full border-2 border-t-[#a5efde] border-l-[#a5efde] border-r-[#217b63] border-b-[#217b63] pl-0.5 leading-[23px]">Total</div>
                </td>
                <td class="border-r-2 border-b-2 border-black p-0 pr-0.5 text-right">57</td>
                ${'<td class="border-r-2 border-b-2 border-black"></td>'.repeat(7)}
                <td class="border-b-2 border-black"></td>
            </tr>`;

            // cell: [text, rowspan, colspan, kind]
            const small = "孔径&lt;4.0";
            const mid = "孔径4.0－6.0";
            const wide = (text) => `<span class="font-['Noto_Sans_CJK_SC']">${text}</span>`;
            const rows = [
                [["", 1, 1, "plain"], ["", 1, 7, "under"]],
                [["", 25, 1, "side"], ["负片工艺焊盘要求：", 2, 7, "title"]],
                [],
                [["流程", 2, 1, "head"], ["表面完成铜厚<br />（D）", 2, 1, "head"], ["孔径类型", 2, 1, "head"], ["孔径范围（mm）", 2, 1, "head"], ["补偿后单边孔环宽度（mm）", 1, 3, "head"]],
                [["板厚≤1.6mm", 1, 1, "head"], ["1.6&lt;板厚&lt;2.0mm", 1, 1, "head"], ["板厚≥2.0mm", 1, 1, "head"]],
                [["LDI/DDI流程", 5], ["D≤70um", 3], ["圆孔", 2, 1, "active"], [small], ["4.5（4.0）"], ["5.0（4.0）"], ["6.0（4.0）"]],
                [[mid], ["5.0（4.5）"], ["6.0（4.5）"], ["7.0（4.5）"]],
                [["槽孔"], ["孔径≤6.05*10.0"], ["8.0（6.0）", 1, 3]],
                [["70um＜D≤105um", 2], ["圆孔", 2], [small], ["6.5（5.0）"], ["7.0（5.0）", 1, 2]],
                [[mid], ["7.0（5.0）"], ["8.0（6.0）", 1, 2]],
                [["", 10], ["", 5], ["圆孔", 3], [small], ["4.5（4.0）"], ["5.0（4.0）"], ["6.0（4.0）"]],
                [[mid], ["5.0（4.5）"], ["6.0（4.5）"], ["7.0（4.5）"]],
                [["孔径6.05－10.0"], ["8.0（6.0）", 1, 3]],
                [["锥形孔"], ["孔径≤5.0"], ["15.0(12.0)"], ["20.0(15.0)", 1, 2]],
                [["槽孔"], ["孔径≤5.0*10.0"], ["8.0（6.0）", 1, 3]],
                [["70um＜D≤105um", 3], ["圆孔", 2], [small], ["6.5（5.0）"], ["7.0（5.0）", 1, 2]],
                [[mid], ["7.0（5.0）"], ["8.0（6.0）", 1, 2]],
                [["槽孔"], ["孔径≤6.0*10.0"], ["10.0(8.0)"], ["15.0(10.0)", 1, 2]],
                [["105um＜D≤140um", 2], ["圆孔", 2], [small], ["6.5（6.0）"], ["7.0（6.0）", 1, 2]],
                [[mid], ["7.0（6.5）"], ["8.0（6.5）", 1, 2]],
                [[
                    "说明：<br />" +
                        "A.&ensp;&thinsp;上表中的封孔能力参数，均是补偿后的数据；<br />" +
                        `B.&ensp;&thinsp;上表中${wide("“（）”")}内为极限能力，${wide("“（）”")}外为常规能力；<br />` +
                        "C.&ensp;&thinsp;上表中≤6.0mm的孔，焊环宽度无论是常规能力还是极限能力，均指整体焊环单边宽；<br />" +
                        "D.&ensp;&thinsp;上表中对于极限能力的限制规定，以CAM单只文件为准不超过40处，个数是指所有小于常规能力总个数不超过40处；",
                    6, 7, "notes",
                ]],
                [], [], [], [], [],
                [["", 1, 8, "plain"]],
            ];
            const kinds = {
                plain: "p-0",
                under: "border-b-2 border-black p-0",
                side: "border-r-2 border-black p-0",
                title: "border-r-2 border-b-2 border-black bg-[#ffff9c] p-0 pt-0.5 text-center",
                head: "border-r-2 border-b-2 border-black bg-[#ceffce] p-0 pt-0.5 text-center whitespace-nowrap",
                body: "border-r-2 border-b-2 border-black p-0 pt-0.5 text-center whitespace-nowrap",
                active: "relative border-r-2 border-b-2 border-black p-0 pt-0.5 text-center",
                notes: "border-r-2 border-b-2 border-black p-0 pl-0.5 text-left whitespace-nowrap",
            };
            const ring =
                '<span class="absolute -inset-0.5 border-2 border-white outline outline-black -outline-offset-3"></span>';

            document.getElementById("sheet").innerHTML = rows
                .map((cells, i) => {
                    const n = i + 1;
                    const picked = n === 6 || n === 7;
                    const tds = cells
                        .map(([text, rs = 1, cs = 1, kind = "body"]) =>
                            `<td rowspan="${rs}" colspan="${cs}" class="${kinds[kind]}">${text}${kind === "active" ? ring : ""}</td>`)
                        .join("");
                    return `<tr class="${n === 26 ? "h-[29px]" : "h-5"}"><th class="border-r border-b p-0 pt-0.5 text-[16px] leading-[17px] font-normal ${n === 26 ? "align-bottom" : ""} ${picked ? "border-[#0a246a] bg-[#b6bdd2]" : "border-[#808080] bg-[#d4d0c8]"}">${n}</th>${tds}</tr>`;
                })
                .join("");
        </script>
    </body>
</html>
